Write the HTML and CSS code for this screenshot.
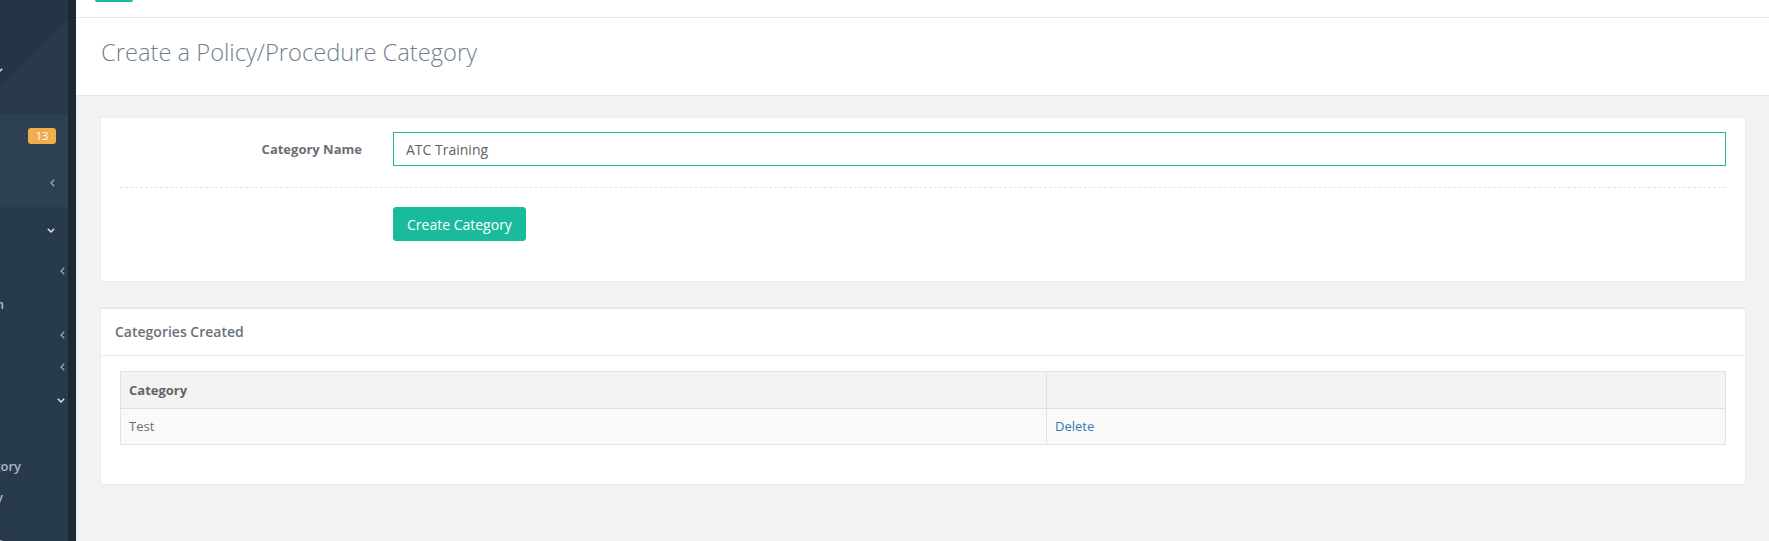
FILE: index.html
```html
<!DOCTYPE html>
<html lang="en">
<head>
<meta charset="utf-8">
<title>Create a Policy/Procedure Category</title>
<link rel="stylesheet" href="styles.css">
</head>
<body>
<div class="app">
  <aside class="sidebar">
    <div class="profile">
      <svg class="chev-frag" width="8" height="5" viewBox="0 0 8 5"><polyline points="0.8,0.8 4,4 7.2,0.8" fill="none" stroke="#e7e7e7" stroke-width="1.5"/></svg>
    </div>
    <div class="group-active">
      <div class="nav-row h44 pr12"><span class="badge">13</span></div>
      <div class="nav-row h49 pr13"><svg class="chev" width="5" height="8" viewBox="0 0 5 8"><polyline points="4.2,0.7 1,4 4.2,7.3" fill="none" stroke="#9aa6b2" stroke-width="1.3"/></svg></div>
    </div>
    <div class="nav-row h46 pr13"><svg class="chev" width="8" height="5" viewBox="0 0 8 5"><polyline points="0.8,0.8 4,4 7.2,0.8" fill="none" stroke="#e7e7e7" stroke-width="1.4"/></svg></div>
    <div class="nav-row h36 pr3"><svg class="chev" width="5" height="8" viewBox="0 0 5 8"><polyline points="4.2,0.7 1,4 4.2,7.3" fill="none" stroke="#9aa6b2" stroke-width="1.3"/></svg></div>
    <div class="nav-row h30 pr64"><span class="nav-text">Administration</span></div>
    <div class="nav-row h32 pr3"><svg class="chev" width="5" height="8" viewBox="0 0 5 8"><polyline points="4.2,0.7 1,4 4.2,7.3" fill="none" stroke="#9aa6b2" stroke-width="1.3"/></svg></div>
    <div class="nav-row h32 pr3"><svg class="chev" width="5" height="8" viewBox="0 0 5 8"><polyline points="4.2,0.7 1,4 4.2,7.3" fill="none" stroke="#9aa6b2" stroke-width="1.3"/></svg></div>
    <div class="nav-row h34 pr3"><svg class="chev" width="8" height="5" viewBox="0 0 8 5"><polyline points="0.8,0.8 4,4 7.2,0.8" fill="none" stroke="#e7e7e7" stroke-width="1.4"/></svg></div>
    <div class="nav-spacer"></div>
    <div class="nav-row h30 pr46"><span class="nav-text">Add Category</span></div>
    <div class="nav-row h32 pr65"><span class="nav-text">View Policy</span></div>
    <div class="nav-row h58 pr65"><span class="nav-text">Reports</span></div>
  </aside>

  <main class="main">
    <div class="topbar"><span class="top-btn"></span></div>
    <div class="page-title">
      <h3>Create a Policy/Procedure Category</h3>
    </div>
    <div class="content">
      <section class="panel panel-form">
        <form class="form-row">
          <label class="form-label" for="catname">Category Name</label>
          <input class="form-input" id="catname" type="text" value="ATC Training">
        </form>
        <div class="ln-dashed"></div>
        <div class="form-row">
          <span></span>
          <div><button class="btn-success" type="button">Create Category</button></div>
        </div>
      </section>

      <section class="panel panel-list">
        <div class="panel-title">Categories Created</div>
        <div class="panel-body">
          <table class="cat-table">
            <thead>
              <tr><th class="col-name">Category</th><th></th></tr>
            </thead>
            <tbody>
              <tr><td>Test</td><td><a class="link" href="#">Delete</a></td></tr>
            </tbody>
          </table>
        </div>
      </section>
    </div>
  </main>
</div>
</body>
</html>
```

FILE: styles.css
```css
* { box-sizing: border-box; }
html, body { margin: 0; padding: 0; }
body {
  font-family: "Open Sans", "Noto Sans", sans-serif;
  font-size: 13px;
  color: #73879C;
  background: #f2f2f2;
  height: 541px;
  overflow: hidden;
}
.app { display: flex; height: 541px; }

/* Sidebar */
.sidebar {
  width: 76px;
  flex-shrink: 0;
  background: #283b4d;
  border-right: 8px solid #1c2833;
  box-shadow: 1px 0 0 #e6e9ed;
  overflow: hidden;
  display: flex;
  flex-direction: column;
}
.profile {
  height: 114px;
  flex-shrink: 0;
  background:
    linear-gradient(135deg, transparent 0 48%, rgba(255,255,255,0.025) 48% 100%),
    #243646;
  padding-top: 68px;
  display: flex;
}
.chev-frag { margin-left: -5px; }
.group-active { background: #2e4152; flex-shrink: 0; }
.nav-row {
  display: flex;
  align-items: center;
  justify-content: flex-end;
  overflow: hidden;
  white-space: nowrap;
  flex-shrink: 0;
}
.h58 { height: 58px; }
.h49 { height: 49px; }
.h46 { height: 46px; }
.h44 { height: 44px; }
.h36 { height: 36px; }
.h34 { height: 34px; }
.h32 { height: 32px; }
.h30 { height: 30px; }
.pr3 { padding-right: 3px; }
.pr12 { padding-right: 12px; }
.pr13 { padding-right: 13px; }
.pr46 { padding-right: 47px; }
.pr64 { padding-right: 64px; }
.pr65 { padding-right: 65px; }
.nav-spacer { height: 34px; flex-shrink: 0; }
.badge {
  display: inline-block;
  width: 28px;
  height: 16px;
  line-height: 16px;
  text-align: center;
  background: #f0ad4e;
  color: #fff;
  font-size: 11px;
  border-radius: 3px;
}
.chev { flex-shrink: 0; display: block; }
.nav-text {
  flex-shrink: 0;
  color: #aeb8c2;
  font-size: 13px;
  font-weight: 600;
}

/* Main */
.main {
  flex: 1;
  display: flex;
  flex-direction: column;
  min-width: 0;
}
.topbar {
  height: 18px;
  background: #fff;
  border-bottom: 1px solid #e3e6ea;
  padding-left: 19px;
}
.top-btn {
  display: block;
  width: 38px;
  height: 2px;
  background: #1ABB9C;
  border-radius: 0 0 3px 3px;
}
.page-title {
  height: 78px;
  background: #fff;
  border-bottom: 1px solid #e6e6e6;
  padding: 18px 0 0 25px;
}
.page-title h3 {
  margin: 0;
  font-size: 23.7px;
  line-height: 33px;
  font-weight: 300;
  color: #6f7f8f;
}

.content {
  padding: 21px 23px 0 24px;
  display: flex;
  flex-direction: column;
  gap: 25px;
}
.panel {
  background: #fff;
  border: 1px solid #e9ebee;
}
.panel-form {
  padding: 14px 19px 40px 19px;
}
.form-row {
  display: grid;
  grid-template-columns: 242px 1fr;
  column-gap: 31px;
  align-items: center;
  margin: 0;
}
.form-label {
  text-align: right;
  font-weight: 700;
  font-size: 13px;
  color: #6b6f73;
}
.form-input {
  height: 34px;
  width: 100%;
  border: 1px solid #1ABB9C;
  padding: 0 12px;
  font-family: "Open Sans", "Noto Sans", sans-serif;
  font-size: 14px;
  color: #5f6266;
  outline: none;
  background: #fff;
  border-radius: 0;
}
.ln-dashed {
  border-top: 1px dashed #e5e5e5;
  margin: 21px 0 19px 0;
}
.btn-success {
  height: 34px;
  padding: 0 13px;
  background: #1ABB9C;
  border: 1px solid #1ABB9C;
  color: #fff;
  font-family: "Open Sans", "Noto Sans", sans-serif;
  font-size: 14px;
  border-radius: 3px;
  cursor: pointer;
}

.panel-list {
  border-top: 2px solid #E6E9ED;
}
.panel-title {
  height: 47px;
  line-height: 46px;
  padding-left: 14px;
  border-bottom: 1px solid #E6E9ED;
  font-size: 14px;
  font-weight: 600;
  color: #6b7178;
}
.panel-body {
  padding: 15px 19px 39px 19px;
}
.cat-table {
  width: 100%;
  border-collapse: collapse;
  border: 1px solid #e1e1e1;
  font-size: 13px;
}
.cat-table th, .cat-table td {
  border: 1px solid #e1e1e1;
  padding: 8px 8px;
  line-height: 19px;
  text-align: left;
}
.cat-table th {
  background: #f3f3f3;
  font-weight: 700;
  color: #626466;
  padding-top: 9px;
  padding-bottom: 8px;
}
.cat-table td { background: #f9f9f9; color: #6a6f75; }
.col-name { width: 926px; }
.link { color: #337ab7; text-decoration: none; }
```
